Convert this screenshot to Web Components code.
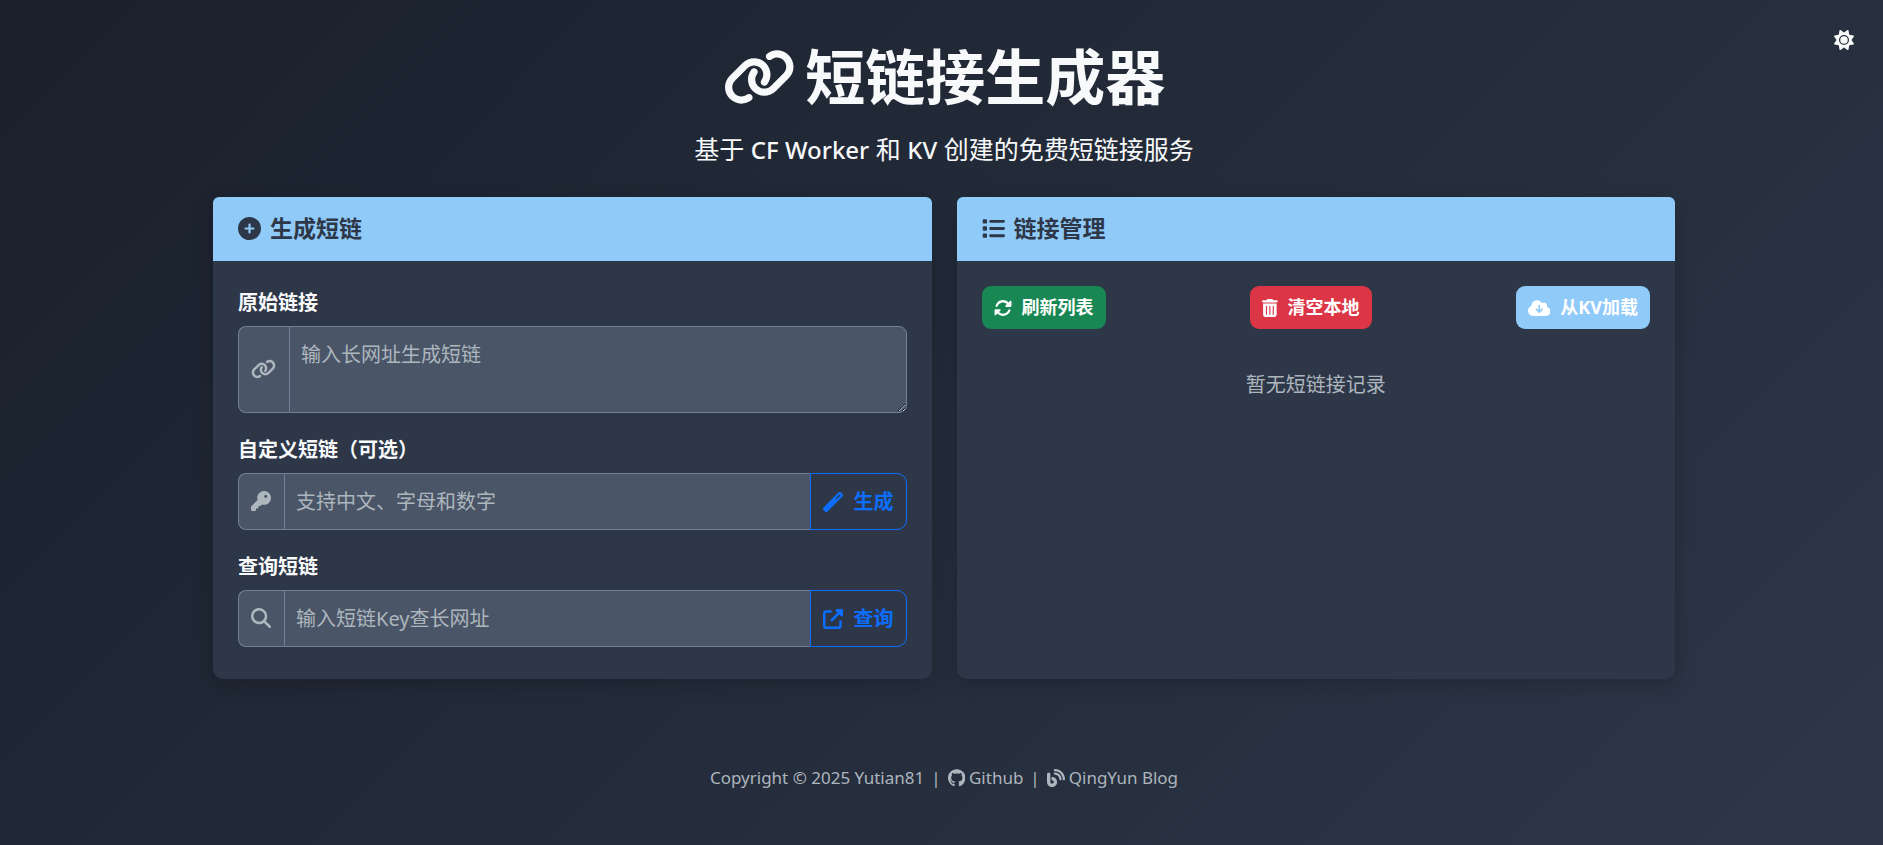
<!DOCTYPE html>
<html lang="zh-CN">
  <head>
    <meta charset="UTF-8">
    <meta name="viewport" content="width=device-width, initial-scale=1">
    <title>短链接生成器</title>
    <style>
html {
  background: #1a202c;
}

body {
  margin: 0;
  min-height: 100vh;
  box-sizing: border-box;
  padding-left: 5px;
  background: linear-gradient(135deg, #1a202c, #2d3748);
  color: #f8f9fa;
  font: 20px/30px "Noto Sans", "Noto Sans CJK SC", sans-serif;
}
    </style>
  </head>
  <body>
    <short-link-app></short-link-app>

    <script type="module">
const ICONS = {
  link: [640, 'M579.8 267.7c56.5-56.5 56.5-148 0-204.5c-50-50-128.8-56.5-186.3-15.4l-1.6 1.1c-14.4 10.3-17.7 30.3-7.4 44.6s30.3 17.7 44.6 7.4l1.6-1.1c32.1-22.9 76-19.3 103.8 8.6c31.5 31.5 31.5 82.5 0 114L422.3 334.8c-31.5 31.5-82.5 31.5-114 0c-27.9-27.9-31.5-71.8-8.6-103.8l1.1-1.6c10.3-14.4 6.9-34.4-7.4-44.6s-34.4-6.9-44.6 7.4l-1.1 1.6C206.5 251.2 213 330 263 380c56.5 56.5 148 56.5 204.5 0L579.8 267.7zM60.2 244.3c-56.5 56.5-56.5 148 0 204.5c50 50 128.8 56.5 186.3 15.4l1.6-1.1c14.4-10.3 17.7-30.3 7.4-44.6s-30.3-17.7-44.6-7.4l-1.6 1.1c-32.1 22.9-76 19.3-103.8-8.6C74 372 74 321 105.5 289.5L217.7 177.2c31.5-31.5 82.5-31.5 114 0c27.9 27.9 31.5 71.8 8.6 103.9l-1.1 1.6c-10.3 14.4-6.9 34.4 7.4 44.6s34.4 6.9 44.6-7.4l1.1-1.6C433.5 260.8 427 182 377 132c-56.5-56.5-148-56.5-204.5 0L60.2 244.3z'],
  sun: [512, 'M361.5 1.2c5 2.1 8.6 6.6 9.6 11.9L391 121l107.9 19.8c5.3 1 9.8 4.6 11.9 9.6s1.5 10.7-1.6 15.2L446.9 256l62.3 90.3c3.1 4.5 3.7 10.2 1.6 15.2s-6.6 8.6-11.9 9.6L391 391 371.1 498.9c-1 5.3-4.6 9.8-9.6 11.9s-10.7 1.5-15.2-1.6L256 446.9l-90.3 62.3c-4.5 3.1-10.2 3.7-15.2 1.6s-8.6-6.6-9.6-11.9L121 391 13.1 371.1c-5.3-1-9.8-4.6-11.9-9.6s-1.5-10.7 1.6-15.2L65.1 256 2.8 165.7c-3.1-4.5-3.7-10.2-1.6-15.2s6.6-8.6 11.9-9.6L121 121 140.9 13.1c1-5.3 4.6-9.8 9.6-11.9s10.7-1.5 15.2 1.6L256 65.1 346.3 2.8c4.5-3.1 10.2-3.7 15.2-1.6zM160 256a96 96 0 1 1 192 0 96 96 0 1 1 -192 0zm224 0a128 128 0 1 0 -256 0 128 128 0 1 0 256 0z'],
  plus: [512, 'M256 512A256 256 0 1 0 256 0a256 256 0 1 0 0 512zM232 344V280H168c-13.3 0-24-10.7-24-24s10.7-24 24-24h64V168c0-13.3 10.7-24 24-24s24 10.7 24 24v64h64c13.3 0 24 10.7 24 24s-10.7 24-24 24H280v64c0 13.3-10.7 24-24 24s-24-10.7-24-24z'],
  key: [512, 'M336 352c97.2 0 176-78.8 176-176S433.2 0 336 0S160 78.8 160 176c0 18.7 2.9 36.8 8.3 53.7L7 391c-4.5 4.5-7 10.6-7 17v80c0 13.3 10.7 24 24 24h80c13.3 0 24-10.7 24-24V448h40c13.3 0 24-10.7 24-24V384h40c6.4 0 12.5-2.5 17-7l33.3-33.3c16.9 5.4 35 8.3 53.7 8.3zM376 96a40 40 0 1 1 0 80 40 40 0 1 1 0-80z'],
  search: [512, 'M416 208c0 45.9-14.9 88.3-40 122.7L502.6 457.4c12.5 12.5 12.5 32.8 0 45.3s-32.8 12.5-45.3 0L330.7 376c-34.4 25.2-76.8 40-122.7 40C93.1 416 0 322.9 0 208S93.1 0 208 0S416 93.1 416 208zM208 352a144 144 0 1 0 0-288 144 144 0 1 0 0 288z'],
  wand: [512, 'M14.1 463.3c-18.7-18.7-18.7-49.1 0-67.9L395.4 14.1c18.7-18.7 49.1-18.7 67.9 0l34.6 34.6c18.7 18.7 18.7 49.1 0 67.9L116.5 497.9c-18.7 18.7-49.1 18.7-67.9 0L14.1 463.3zM347.6 187.6l105-105L429.4 59.3l-105 105 23.3 23.3z'],
  external: [512, 'M352 0c-12.9 0-24.6 7.8-29.6 19.8s-2.2 25.7 6.9 34.9L370.7 96 201.4 265.4c-12.5 12.5-12.5 32.8 0 45.3s32.8 12.5 45.3 0L416 141.3l41.4 41.4c9.2 9.2 22.9 11.9 34.9 6.9s19.8-16.6 19.8-29.6V32c0-17.7-14.3-32-32-32H352zM80 32C35.8 32 0 67.8 0 112V432c0 44.2 35.8 80 80 80H400c44.2 0 80-35.8 80-80V320c0-17.7-14.3-32-32-32s-32 14.3-32 32V432c0 8.8-7.2 16-16 16H80c-8.8 0-16-7.2-16-16V112c0-8.8 7.2-16 16-16H192c17.7 0 32-14.3 32-32s-14.3-32-32-32H80z'],
  list: [512, 'M40 48C26.7 48 16 58.7 16 72v48c0 13.3 10.7 24 24 24H88c13.3 0 24-10.7 24-24V72c0-13.3-10.7-24-24-24H40zM192 64c-17.7 0-32 14.3-32 32s14.3 32 32 32H480c17.7 0 32-14.3 32-32s-14.3-32-32-32H192zm0 160c-17.7 0-32 14.3-32 32s14.3 32 32 32H480c17.7 0 32-14.3 32-32s-14.3-32-32-32H192zm0 160c-17.7 0-32 14.3-32 32s14.3 32 32 32H480c17.7 0 32-14.3 32-32s-14.3-32-32-32H192zM16 232v48c0 13.3 10.7 24 24 24H88c13.3 0 24-10.7 24-24V232c0-13.3-10.7-24-24-24H40c-13.3 0-24 10.7-24 24zM40 368c-13.3 0-24 10.7-24 24v48c0 13.3 10.7 24 24 24H88c13.3 0 24-10.7 24-24V392c0-13.3-10.7-24-24-24H40z'],
  rotate: [512, 'M142.9 142.9c62.2-62.2 162.7-62.5 225.3-1L327 183c-6.9 6.9-8.9 17.2-5.2 26.2s12.5 14.8 22.2 14.8H463.5c0 0 0 0 0 0H472c13.3 0 24-10.7 24-24V72c0-9.7-5.8-18.5-14.8-22.2s-19.3-1.7-26.2 5.2L413.4 96.6c-87.6-86.5-228.7-86.2-315.8 1C73.2 122 55.6 150.7 44.8 181.4c-5.9 16.7 2.9 34.9 19.5 40.8s34.9-2.9 40.8-19.5c7.7-21.8 20.2-42.3 37.8-59.8zM16 312v7.6 .7V440c0 9.7 5.8 18.5 14.8 22.2s19.3 1.7 26.2-5.2l41.6-41.6c87.6 86.5 228.7 86.2 315.8-1c24.4-24.4 42.1-53.1 52.9-83.7c5.9-16.7-2.9-34.9-19.5-40.8s-34.9 2.9-40.8 19.5c-7.7 21.8-20.2 42.3-37.8 59.8c-62.2 62.2-162.7 62.5-225.3 1L185 329c6.9-6.9 8.9-17.2 5.2-26.2s-12.5-14.8-22.2-14.8H48.4h-.7H40c-13.3 0-24 10.7-24 24z'],
  trash: [448, 'M135.2 17.7C140.6 6.8 151.7 0 163.8 0H284.2c12.1 0 23.2 6.8 28.6 17.7L320 32h96c17.7 0 32 14.3 32 32s-14.3 32-32 32H32C14.3 96 0 81.7 0 64S14.3 32 32 32h96l7.2-14.3zM32 128H416V448c0 35.3-28.7 64-64 64H96c-35.3 0-64-28.7-64-64V128zm96 64c-8.8 0-16 7.2-16 16V432c0 8.8 7.2 16 16 16s16-7.2 16-16V208c0-8.8-7.2-16-16-16zm96 0c-8.8 0-16 7.2-16 16V432c0 8.8 7.2 16 16 16s16-7.2 16-16V208c0-8.8-7.2-16-16-16zm96 0c-8.8 0-16 7.2-16 16V432c0 8.8 7.2 16 16 16s16-7.2 16-16V208c0-8.8-7.2-16-16-16z'],
  cloud: [640, 'M144 480C64.5 480 0 415.5 0 336c0-62.8 40.2-116.2 96.2-135.9c-.1-2.7-.2-5.4-.2-8.1c0-88.4 71.6-160 160-160c59.3 0 111 32.2 138.7 80.2C409.9 102 428.3 96 448 96c53 0 96 43 96 96c0 12.2-2.3 23.8-6.4 34.6C596 238.4 640 290.1 640 352c0 70.7-57.3 128-128 128H144zm79-167l80 80c9.4 9.4 24.6 9.4 33.9 0l80-80c9.4-9.4 9.4-24.6 0-33.9s-24.6-9.4-33.9 0l-39 39V184c0-13.3-10.7-24-24-24s-24 10.7-24 24V318.1l-39-39c-9.4-9.4-24.6-9.4-33.9 0s-9.4 24.6 0 33.9z'],
  github: [496, 'M165.9 397.4c0 2-2.3 3.6-5.2 3.6-3.3.3-5.6-1.3-5.6-3.6 0-2 2.3-3.6 5.2-3.6 3-.3 5.6 1.3 5.6 3.6zm-31.1-4.5c-.7 2 1.3 4.3 4.3 4.9 2.6 1 5.6 0 6.2-2s-1.3-4.3-4.3-5.2c-2.6-.7-5.5.3-6.2 2.3zm44.2-1.7c-2.9.7-4.9 2.6-4.6 4.9.3 2 2.9 3.3 5.9 2.6 2.9-.7 4.9-2.6 4.6-4.6-.3-1.9-3-3.2-5.9-2.9zM244.8 8C106.1 8 0 113.3 0 252c0 110.9 69.8 205.8 169.5 239.2 12.8 2.3 17.3-5.6 17.3-12.1 0-6.2-.3-40.4-.3-61.4 0 0-70 15-84.7-29.8 0 0-11.4-29.1-27.8-36.6 0 0-22.9-15.7 1.6-15.4 0 0 24.9 2 38.6 25.8 21.9 38.6 58.6 27.5 72.9 20.9 2.3-16 8.8-27.1 16-33.7-55.9-6.2-112.3-14.3-112.3-110.5 0-27.5 7.6-41.3 23.6-58.9-2.6-6.5-11.1-33.3 2.6-67.9 20.9-6.5 69 27 69 27 20-5.6 41.5-8.5 62.8-8.5s42.8 2.9 62.8 8.5c0 0 48.1-33.6 69-27 13.7 34.7 5.2 61.4 2.6 67.9 16 17.7 25.8 31.5 25.8 58.9 0 96.5-58.9 104.2-114.8 110.5 9.2 7.9 17 22.9 17 46.4 0 33.7-.3 75.4-.3 83.6 0 6.5 4.6 14.4 17.3 12.1C428.2 457.8 496 362.9 496 252 496 113.3 383.5 8 244.8 8z'],
  blog: [512, 'M192 32c0 17.7 14.3 32 32 32c123.7 0 224 100.3 224 224c0 17.7 14.3 32 32 32s32-14.3 32-32C512 128.9 383.1 0 224 0c-17.7 0-32 14.3-32 32zm0 96c0 17.7 14.3 32 32 32c70.7 0 128 57.3 128 128c0 17.7 14.3 32 32 32s32-14.3 32-32c0-106-86-192-192-192c-17.7 0-32 14.3-32 32zM96 144c0-26.5-21.5-48-48-48S0 117.5 0 144V368c0 79.5 64.5 144 144 144s144-64.5 144-144s-64.5-144-144-144H128v96h16c26.5 0 48 21.5 48 48s-21.5 48-48 48s-48-21.5-48-48V144z'],
};

// Icon, one em high
class AppIcon extends HTMLElement {
  constructor() {
    super();
    this.attachShadow({ mode: 'open' });
  }

  connectedCallback() {
    const [width, path] = ICONS[this.getAttribute('name')];
    this.shadowRoot.innerHTML = `
      <style>
        :host { display: inline-flex; flex: none; }
        svg { display: block; height: 1em; fill: currentColor; }
      </style>
      <svg viewBox="0 0 ${width} 512" aria-hidden="true"><path d="${path}"/></svg>
    `;
  }
}
customElements.define('app-icon', AppIcon);

class PanelCard extends HTMLElement {
  constructor() {
    super();
    this.attachShadow({ mode: 'open' });
  }

  connectedCallback() {
    this.shadowRoot.innerHTML = `
      <style>
        :host {
          display: block;
          border-radius: 10px;
          background: #2d3748;
          box-shadow: 0 5px 20px rgba(0, 0, 0, 0.2);
        }
        h2 {
          display: flex;
          align-items: center;
          gap: 9px;
          margin: 0;
          padding: 15px 25px 17px;
          border-radius: 6px 6px 0 0;
          background: #90caf9;
          color: #2d3748;
          font-size: 23px;
          line-height: 32px;
          font-weight: 700;
        }
        .body { padding: 25px; }
      </style>
      <h2><app-icon name="${this.getAttribute('icon')}"></app-icon>${this.getAttribute('heading')}</h2>
      <div class="body"><slot></slot></div>
    `;
  }
}
customElements.define('panel-card', PanelCard);

// Label over an input group: icon, text box, optional button
class LinkField extends HTMLElement {
  constructor() {
    super();
    this.attachShadow({ mode: 'open' });
  }

  connectedCallback() {
    const placeholder = this.getAttribute('placeholder');
    const action = this.getAttribute('action');
    const control = this.hasAttribute('multiline')
      ? `<textarea id="field" rows="2" placeholder="${placeholder}"></textarea>`
      : `<input id="field" type="text" placeholder="${placeholder}">`;
    this.shadowRoot.innerHTML = `
      <style>
        :host { display: block; }
        label {
          display: block;
          margin-bottom: 8px;
          font-weight: 700;
          line-height: 30px;
        }
        .group { display: flex; }
        .addon, .control, button {
          box-sizing: border-box;
          border: 1px solid #718096;
        }
        .addon {
          display: flex;
          align-items: center;
          padding: 0 13px 2px 12px;
          border-right: 0;
          border-radius: 8px 0 0 8px;
          background: #4a5568;
          color: #adb5bd;
        }
        .control { flex: 1; display: flex; background: #4a5568; }
        .control.last { border-radius: 0 8px 8px 0; }
        input, textarea {
          flex: 1;
          min-width: 0;
          box-sizing: border-box;
          margin: 0;
          padding: 13px 11px;
          border: 0;
          border-radius: inherit;
          outline: 0;
          background: transparent;
          color: #f8f9fa;
          font: inherit;
          line-height: 30px;
        }
        input { height: 55px; }
        textarea { resize: vertical; height: 85px; color-scheme: dark; }
        ::placeholder { color: #adb5bd; opacity: 1; }
        button {
          display: flex;
          align-items: center;
          gap: 11px;
          padding: 0 12px;
          border-color: #0d6efd;
          border-radius: 0 10px 10px 0;
          background: transparent;
          color: #0d6efd;
          font: inherit;
          font-weight: 700;
        }
        .control:has(+ button) { border-right: 0; }
      </style>
      <label for="field">${this.getAttribute('label')}</label>
      <div class="group">
        <span class="addon"><app-icon name="${this.getAttribute('icon')}"></app-icon></span>
        <span class="control ${action ? '' : 'last'}">${control}</span>
        ${action ? `<button type="button"><app-icon name="${this.getAttribute('action-icon')}"></app-icon>${action}</button>` : ''}
      </div>
    `;
  }
}
customElements.define('link-field', LinkField);

class ActionButton extends HTMLElement {
  constructor() {
    super();
    this.attachShadow({ mode: 'open' });
  }

  connectedCallback() {
    this.shadowRoot.innerHTML = `
      <style>
        :host { display: block; }
        button {
          display: flex;
          align-items: center;
          gap: 10px;
          padding: 8px 12px;
          border: 0;
          border-radius: 9px;
          background: var(--button-color);
          color: #fff;
          font: inherit;
          font-size: 18px;
          line-height: 27px;
          font-weight: 700;
        }
      </style>
      <button type="button"><app-icon name="${this.getAttribute('icon')}"></app-icon><span><slot></slot></span></button>
    `;
  }
}
customElements.define('action-button', ActionButton);

class ShortLinkApp extends HTMLElement {
  constructor() {
    super();
    this.attachShadow({ mode: 'open' });
  }

  connectedCallback() {
    this.shadowRoot.innerHTML = `
      <style>
        :host { display: block; position: relative; }
        .theme {
          position: absolute;
          top: 30px;
          right: 29px;
          display: flex;
          padding: 0;
          border: 0;
          background: none;
          color: #f8f9fa;
          font-size: 20px;
        }
        header { padding-top: 40px; text-align: center; }
        h1 {
          display: flex;
          justify-content: center;
          align-items: center;
          gap: 10px;
          margin: 0 0 17px;
          font-size: 60px;
          line-height: 74px;
          font-weight: 700;
        }
        h1 app-icon { font-size: 58px; }
        header p {
          margin: 0;
          font-size: 25px;
          line-height: 36px;
        }
        header span { font-size: 24px; line-height: 24px; font-weight: 500; }
        main {
          display: grid;
          grid-template-columns: 1fr 1fr;
          gap: 25px;
          max-width: 1462px;
          margin: 30px auto 0;
        }
        .fields { display: grid; gap: 22px; padding: 2px 0 7px; }
        .actions { display: flex; justify-content: space-between; }
        .refresh { --button-color: #198754; }
        .clear { --button-color: #dc3545; }
        .load { --button-color: #90caf9; }
        .empty { margin: 41px 0 0; color: #adb5bd; text-align: center; }
        footer {
          display: flex;
          justify-content: center;
          gap: 7px;
          padding: 85px 0 52px;
          color: #adb5bd;
          font-size: 17px;
          line-height: 27px;
        }
        footer a {
          display: inline-flex;
          align-items: center;
          gap: 4px;
          color: inherit;
          text-decoration: none;
        }
        footer app-icon { font-size: 18px; }
      </style>
      <button class="theme" type="button" aria-label="切换主题"><app-icon name="sun"></app-icon></button>
      <header>
        <h1><app-icon name="link"></app-icon>短链接生成器</h1>
        <p>基于 <span>CF Worker</span> 和 <span>KV</span> 创建的免费短链接服务</p>
      </header>
      <main>
        <panel-card icon="plus" heading="生成短链">
          <div class="fields">
            <link-field label="原始链接" icon="link" placeholder="输入长网址生成短链" multiline></link-field>
            <link-field label="自定义短链（可选）" icon="key" placeholder="支持中文、字母和数字" action="生成" action-icon="wand"></link-field>
            <link-field label="查询短链" icon="search" placeholder="输入短链Key查长网址" action="查询" action-icon="external"></link-field>
          </div>
        </panel-card>
        <panel-card icon="list" heading="链接管理">
          <div class="actions">
            <action-button class="refresh" icon="rotate">刷新列表</action-button>
            <action-button class="clear" icon="trash">清空本地</action-button>
            <action-button class="load" icon="cloud">从KV加载</action-button>
          </div>
          <p class="empty">暂无短链接记录</p>
        </panel-card>
      </main>
      <footer>
        <span>Copyright © 2025 Yutian81</span>
        <span>|</span>
        <a href="#github"><app-icon name="github"></app-icon>Github</a>
        <span>|</span>
        <a href="#blog"><app-icon name="blog"></app-icon>QingYun Blog</a>
      </footer>
    `;
  }
}
customElements.define('short-link-app', ShortLinkApp);
    </script>
  </body>
</html>
